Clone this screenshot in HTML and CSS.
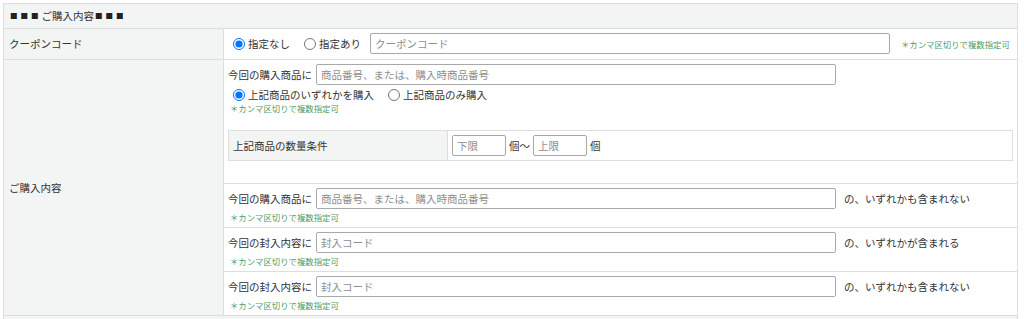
FILE: index.html
```html
<!DOCTYPE html>
<html lang="ja">
<head>
<meta charset="utf-8">
<title>ご購入内容</title>
<link rel="stylesheet" href="styles.css">
</head>
<body>
<div class="form">
  <div class="section-head"><span class="mark">■■■</span>ご購入内容<span class="mark mark-end">■■■</span></div>

  <div class="row">
    <div class="label">クーポンコード</div>
    <div class="value coupon">
      <label class="choice"><input type="radio" name="coupon" checked><span>指定なし</span></label>
      <label class="choice choice-tight"><input type="radio" name="coupon"><span>指定あり</span></label>
      <input class="text-input" type="text" placeholder="クーポンコード">
      <span class="note note-inline">＊カンマ区切りで複数指定可</span>
    </div>
  </div>

  <div class="row">
    <div class="label">ご購入内容</div>
    <div class="value">
      <div class="sub sub-first">
        <div class="field">
          <span>今回の購入商品に</span>
          <input class="text-input" type="text" placeholder="商品番号、または、購入時商品番号">
        </div>
        <div class="radio-line">
          <label class="choice"><input type="radio" name="buy" checked><span>上記商品のいずれかを購入</span></label>
          <label class="choice choice-next"><input type="radio" name="buy"><span>上記商品のみ購入</span></label>
        </div>
        <div class="note">＊カンマ区切りで複数指定可</div>
        <div class="qty">
          <div class="qty-label">上記商品の数量条件</div>
          <div class="qty-value">
            <input class="small-input" type="text" placeholder="下限">
            <span>個〜</span>
            <input class="small-input" type="text" placeholder="上限">
            <span>個</span>
          </div>
        </div>
      </div>

      <div class="sub">
        <div class="field">
          <span>今回の購入商品に</span>
          <input class="text-input" type="text" placeholder="商品番号、または、購入時商品番号">
          <span class="suffix">の、いずれかも含まれない</span>
        </div>
        <div class="note note-below">＊カンマ区切りで複数指定可</div>
      </div>

      <div class="sub">
        <div class="field">
          <span>今回の封入内容に</span>
          <input class="text-input" type="text" placeholder="封入コード">
          <span class="suffix">の、いずれかが含まれる</span>
        </div>
        <div class="note note-below">＊カンマ区切りで複数指定可</div>
      </div>

      <div class="sub">
        <div class="field">
          <span>今回の封入内容に</span>
          <input class="text-input" type="text" placeholder="封入コード">
          <span class="suffix">の、いずれかも含まれない</span>
        </div>
        <div class="note note-below">＊カンマ区切りで複数指定可</div>
      </div>
    </div>
  </div>

  <div class="section-head section-next"></div>
</div>
</body>
</html>
```

FILE: styles.css
```css
html, body {
  margin: 0;
  padding: 0;
  background: #ffffff;
  overflow: hidden;
}

body {
  font-family: "Noto Sans CJK JP", "Noto Sans", sans-serif;
  font-size: 10.5px;
  line-height: 14px;
  color: #333333;
}

.form {
  margin: 3px 0 0 3px;
  width: 1015px;
  box-sizing: border-box;
  border: 1px solid #dedede;
  border-bottom: none;
}

.section-head {
  height: 24px;
  display: flex;
  align-items: center;
  padding-left: 6px;
  background: #f3f4f4;
  white-space: nowrap;
}

.mark {
  font-size: 7.5px;
  letter-spacing: 3px;
  color: #222222;
}

.mark-end {
  margin-left: 1px;
}

.section-next {
  border-top: 1px solid #dedede;
}

.row {
  display: grid;
  grid-template-columns: 220px 1fr;
  border-top: 1px solid #dedede;
}

.label {
  background: #f3f4f4;
  border-right: 1px solid #dedede;
  padding-left: 5px;
  display: flex;
  align-items: center;
}

.value {
  min-width: 0;
}

.coupon {
  display: flex;
  align-items: center;
  gap: 4px;
  padding: 4px 4px 5px;
  white-space: nowrap;
}

.coupon > * {
  flex-shrink: 0;
}

.choice {
  display: inline-flex;
  align-items: center;
  gap: 3px;
  white-space: nowrap;
  flex-shrink: 0;
}

.choice input[type="radio"] {
  width: 12px;
  height: 12px;
  margin: 0 0 0 5px;
}

.choice-next {
  margin-left: 9px;
}

.choice-tight {
  margin-left: 5px;
}

.coupon .text-input {
  margin-left: 5px;
}

.text-input {
  width: 520px;
  height: 21px;
  box-sizing: border-box;
  border: 1px solid #a8a8a8;
  border-radius: 2px;
  padding: 0 4px;
  font: inherit;
  color: #333333;
  background: #ffffff;
  flex-shrink: 0;
}

.small-input {
  width: 54px;
  height: 21px;
  box-sizing: border-box;
  border: 1px solid #a8a8a8;
  border-radius: 2px;
  padding: 0 4px;
  font: inherit;
  color: #333333;
  background: #ffffff;
  flex-shrink: 0;
}

.text-input::placeholder,
.small-input::placeholder {
  color: #8e8e8e;
}

.note {
  font-size: 8.4px;
  line-height: 12px;
  color: #4f9a62;
  padding-left: 2px;
  white-space: nowrap;
}

.note-inline {
  margin-left: 7px;
  padding-left: 0;
}

.note-below {
  margin-top: 2px;
}

.sub {
  padding: 4px 4px 4px;
  border-top: 1px solid #dedede;
}

.sub-first {
  border-top: none;
  padding-bottom: 0;
}

.field {
  display: flex;
  align-items: center;
  gap: 4px;
  white-space: nowrap;
}

.suffix {
  margin-left: 4px;
}

.radio-line {
  display: flex;
  align-items: center;
  height: 14px;
  margin-top: 3px;
}

.qty {
  display: grid;
  grid-template-columns: 219px 1fr;
  height: 31px;
  box-sizing: border-box;
  border: 1px solid #dedede;
  margin: 16px 0 22px;
}

.qty-label {
  background: #f3f4f4;
  border-right: 1px solid #dedede;
  padding-left: 4px;
  display: flex;
  align-items: center;
}

.qty-value {
  display: flex;
  align-items: center;
  gap: 3px;
  padding-left: 4px;
}
```
